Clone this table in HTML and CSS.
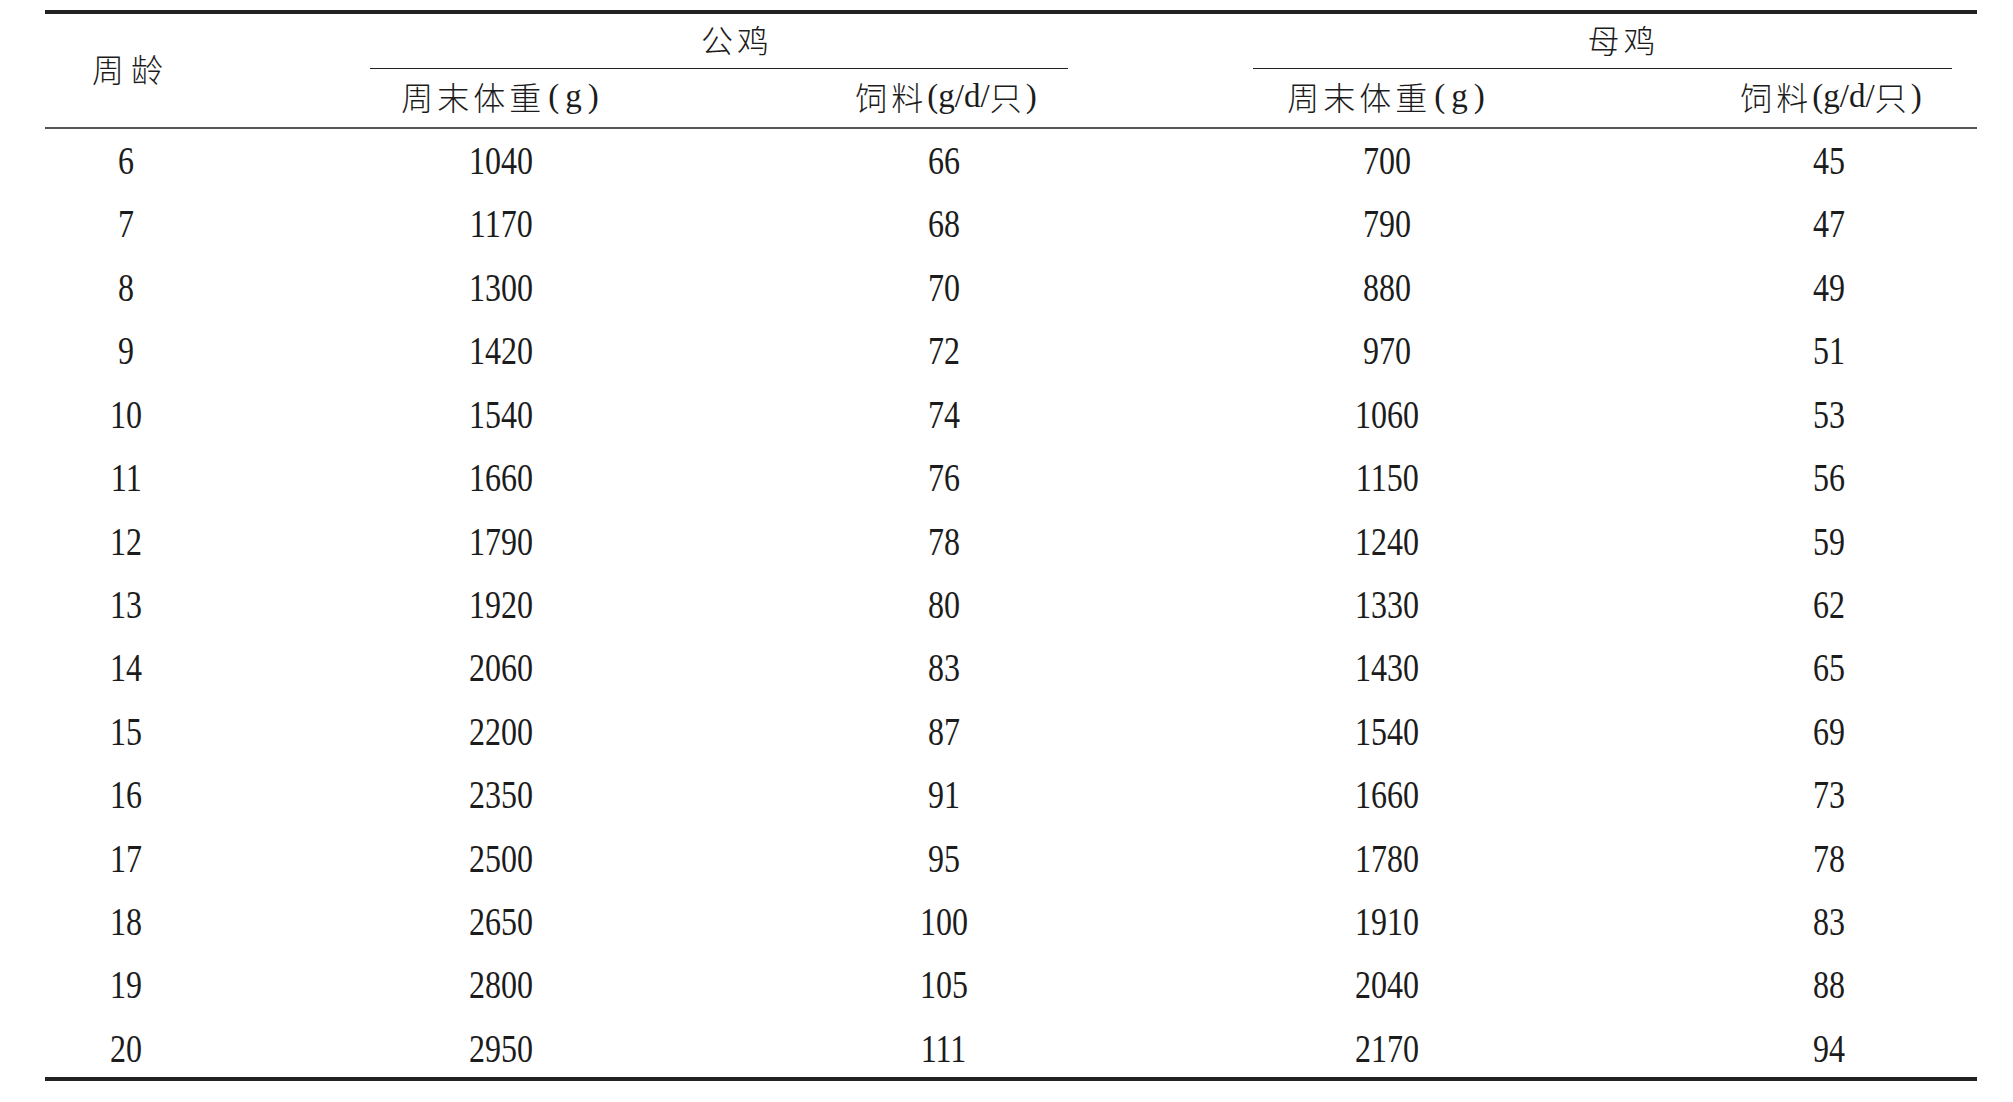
FILE: index.html
```html
<!DOCTYPE html>
<html lang="zh">
<head>
<meta charset="utf-8">
<title>周龄 体重 饲料</title>
<link rel="stylesheet" href="styles.css">
</head>
<body>
<div class="table">
  <div class="head">
    <div class="age">周龄</div>
    <div class="group g1"><span>公鸡</span></div>
    <div class="group g2"><span>母鸡</span></div>
    <div class="sub">周末体重<span class="par">(g)</span></div>
    <div class="sub">饲料<span class="lat">(g/d/</span>只<span class="lat">)</span></div>
    <div class="sub">周末体重<span class="par">(g)</span></div>
    <div class="sub">饲料<span class="lat">(g/d/</span>只<span class="lat">)</span></div>
  </div>
  <div class="body">
    <div class="row"><span>6</span><span>1040</span><span>66</span><span>700</span><span>45</span></div>
    <div class="row"><span>7</span><span>1170</span><span>68</span><span>790</span><span>47</span></div>
    <div class="row"><span>8</span><span>1300</span><span>70</span><span>880</span><span>49</span></div>
    <div class="row"><span>9</span><span>1420</span><span>72</span><span>970</span><span>51</span></div>
    <div class="row"><span>10</span><span>1540</span><span>74</span><span>1060</span><span>53</span></div>
    <div class="row"><span>11</span><span>1660</span><span>76</span><span>1150</span><span>56</span></div>
    <div class="row"><span>12</span><span>1790</span><span>78</span><span>1240</span><span>59</span></div>
    <div class="row"><span>13</span><span>1920</span><span>80</span><span>1330</span><span>62</span></div>
    <div class="row"><span>14</span><span>2060</span><span>83</span><span>1430</span><span>65</span></div>
    <div class="row"><span>15</span><span>2200</span><span>87</span><span>1540</span><span>69</span></div>
    <div class="row"><span>16</span><span>2350</span><span>91</span><span>1660</span><span>73</span></div>
    <div class="row"><span>17</span><span>2500</span><span>95</span><span>1780</span><span>78</span></div>
    <div class="row"><span>18</span><span>2650</span><span>100</span><span>1910</span><span>83</span></div>
    <div class="row"><span>19</span><span>2800</span><span>105</span><span>2040</span><span>88</span></div>
    <div class="row"><span>20</span><span>2950</span><span>111</span><span>2170</span><span>94</span></div>
  </div>
</div>
</body>
</html>
```
FILE: styles.css
```css
html, body {
  margin: 0;
  padding: 0;
  background: #ffffff;
}

body {
  color: #1c1c1c;
  font-family: "Liberation Serif", "Noto Sans CJK SC", serif;
  overflow: hidden;
}

.table {
  width: 1932px;
  margin: 10px 0 0 45px;
  border-top: 4px solid #222222;
  border-bottom: 4px solid #222222;
}

.head {
  display: grid;
  grid-template-columns: 162px 588px 298px 588px 296px;
  grid-template-rows: 55px 58px;
  border-bottom: 2px solid #555555;
  font-size: 32px;
  font-weight: 300;
  letter-spacing: 4px;
}

.age {
  grid-row: 1 / 3;
  display: flex;
  align-items: center;
  justify-content: center;
  padding: 0 0 6px 10px;
  letter-spacing: 7px;
}

.group {
  grid-column: span 2;
  display: flex;
  align-items: center;
  justify-content: center;
  border-bottom: 1.5px solid #222222;
  padding-bottom: 5px;
}

.g1 {
  margin: 0 25px 0 163px;
  padding-left: 36px;
}

.g2 {
  margin: 0 25px 0 160px;
  padding-left: 42px;
}

.sub {
  display: flex;
  align-items: center;
  justify-content: center;
  padding: 0 0 4px 4px;
  white-space: nowrap;
}

.par {
  font-size: 33px;
  letter-spacing: 6px;
  padding-left: 3px;
}

.lat {
  font-size: 33px;
  letter-spacing: 0;
}

.body {
  margin-bottom: -3.5px;
}

.row {
  display: grid;
  grid-template-columns: 162px 588px 298px 588px 296px;
  height: 63.43px;
  align-items: center;
  justify-items: center;
  font-size: 40px;
  line-height: 63.43px;
}

.row span {
  display: inline-block;
  transform: scaleX(0.8);
}
```
